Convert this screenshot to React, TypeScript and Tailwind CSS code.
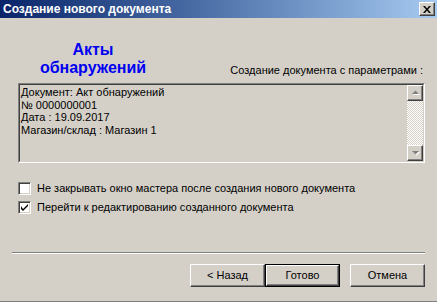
import React from 'react';

const font = "font-['Liberation_Sans',Arial,sans-serif]";

const Raised: React.FC<{ className?: string; children?: React.ReactNode }> = ({ className = '', children }) => (
    <div className={`border border-t-white border-l-white border-r-[#404040] border-b-[#404040] shadow-[inset_-1px_-1px_0_#808080] bg-[#d4d0c8] flex items-center justify-center ${className}`}>
        {children}
    </div>
);

const Arrow: React.FC<{ down?: boolean }> = ({ down }) => (
    <svg width="9" height="6" viewBox="0 0 9 6">
        {down ? (
            <>
                <polygon points="2,2 9,2 5.5,5.5" fill="#fff" />
                <polygon points="1,1 8,1 4.5,4.5" fill="#808080" />
            </>
        ) : (
            <>
                <polygon points="5.5,1.5 9,5 2,5" fill="#fff" />
                <polygon points="4.5,0.5 8,4 1,4" fill="#808080" />
            </>
        )}
    </svg>
);

const Checkbox: React.FC<{ checked?: boolean; label: string }> = ({ checked, label }) => (
    <div className="flex items-center h-[13px]">
        <div className="w-[13px] h-[13px] bg-white border border-t-[#808080] border-l-[#808080] border-r-white border-b-white shadow-[inset_1px_1px_0_#404040,inset_-1px_-1px_0_#d4d0c8] flex items-center justify-center">
            {checked && (
                <svg width="7" height="7" viewBox="0 0 7 7">
                    <path d="M0 2v3l2 2 5-5v-2l-5 5z" fill="#000" />
                </svg>
            )}
        </div>
        <span className="ml-[6px] text-[11px] leading-[13px] text-black">{label}</span>
    </div>
);

const App: React.FC = () => {
    return (
        <div className={`w-[437px] h-[302px] bg-[#d4d0c8] flex flex-col border-b border-[#808080] overflow-hidden ${font}`}>
            {/* Title bar */}
            <div className="h-[18px] flex items-center justify-between pl-[3px] pr-[2px] bg-linear-to-r from-[#0a246a] to-[#a6caf0]">
                <span className="text-white font-bold text-[12px] leading-[18px]">Создание нового документа</span>
                <Raised className="w-[16px] h-[14px]">
                    <svg width="8" height="7" viewBox="0 0 8 7">
                        <path d="M0 0h2l2 2.5 2-2.5h2l-3 3.5 3 3.5h-2l-2-2.5-2 2.5h-2l3-3.5z" fill="#000" />
                    </svg>
                </Raised>
            </div>

            {/* Header row */}
            <div className="flex items-end mt-[23px] pl-[18px] pr-[14px]">
                <div className="w-[150px] text-center text-[16px] leading-[18px] font-bold text-[#0000f0]">
                    Акты
                    <br />
                    обнаружений
                </div>
                <div className="flex-1 text-right text-[11px] leading-[14px] text-black">Создание документа с параметрами :</div>
            </div>

            {/* Memo */}
            <div className="mt-[6px] ml-[18px] w-[407px] h-[80px] border border-t-[#808080] border-l-[#808080] border-r-white border-b-white">
                <div className="h-full border border-t-[#404040] border-l-[#404040] border-r-[#d4d0c8] border-b-[#d4d0c8] flex">
                    <div className="flex-1 pl-[1px] pt-[1px] text-[11px] leading-[12.5px] text-black">
                        <div>Документ: Акт обнаружений</div>
                        <div>№ 0000000001</div>
                        <div>Дата : 19.09.2017</div>
                        <div>Магазин/склад : Магазин 1</div>
                    </div>
                    <div className="w-[16px] flex flex-col">
                        <Raised className="h-[16px]">
                            <Arrow />
                        </Raised>
                        <div className="flex-1 bg-[repeating-conic-gradient(#ffffff_0_25%,#d4d0c8_0_50%)] [background-size:2px_2px]" />
                        <Raised className="h-[16px]">
                            <Arrow down />
                        </Raised>
                    </div>
                </div>
            </div>

            {/* Options */}
            <div className="mt-[19px] ml-[18px] flex flex-col gap-[6px]">
                <Checkbox label="Не закрывать окно мастера после создания нового документа" />
                <Checkbox checked label="Перейти к редактированию созданного документа" />
            </div>

            {/* Separator */}
            <div className="mt-[38px] ml-[12px] mr-[12px] h-[2px] border-t border-t-[#808080] border-b border-b-white" />

            {/* Buttons */}
            <div className="mt-[10px] flex justify-end pr-[12px] text-[11px] text-black">
                <Raised className="w-[75px] h-[23px]">&lt; Назад</Raised>
                <div className="w-[75px] h-[23px] border border-black">
                    <Raised className="w-full h-full">Готово</Raised>
                </div>
                <Raised className="w-[75px] h-[23px] ml-[10px]">Отмена</Raised>
            </div>
        </div>
    );
};

export default App;
